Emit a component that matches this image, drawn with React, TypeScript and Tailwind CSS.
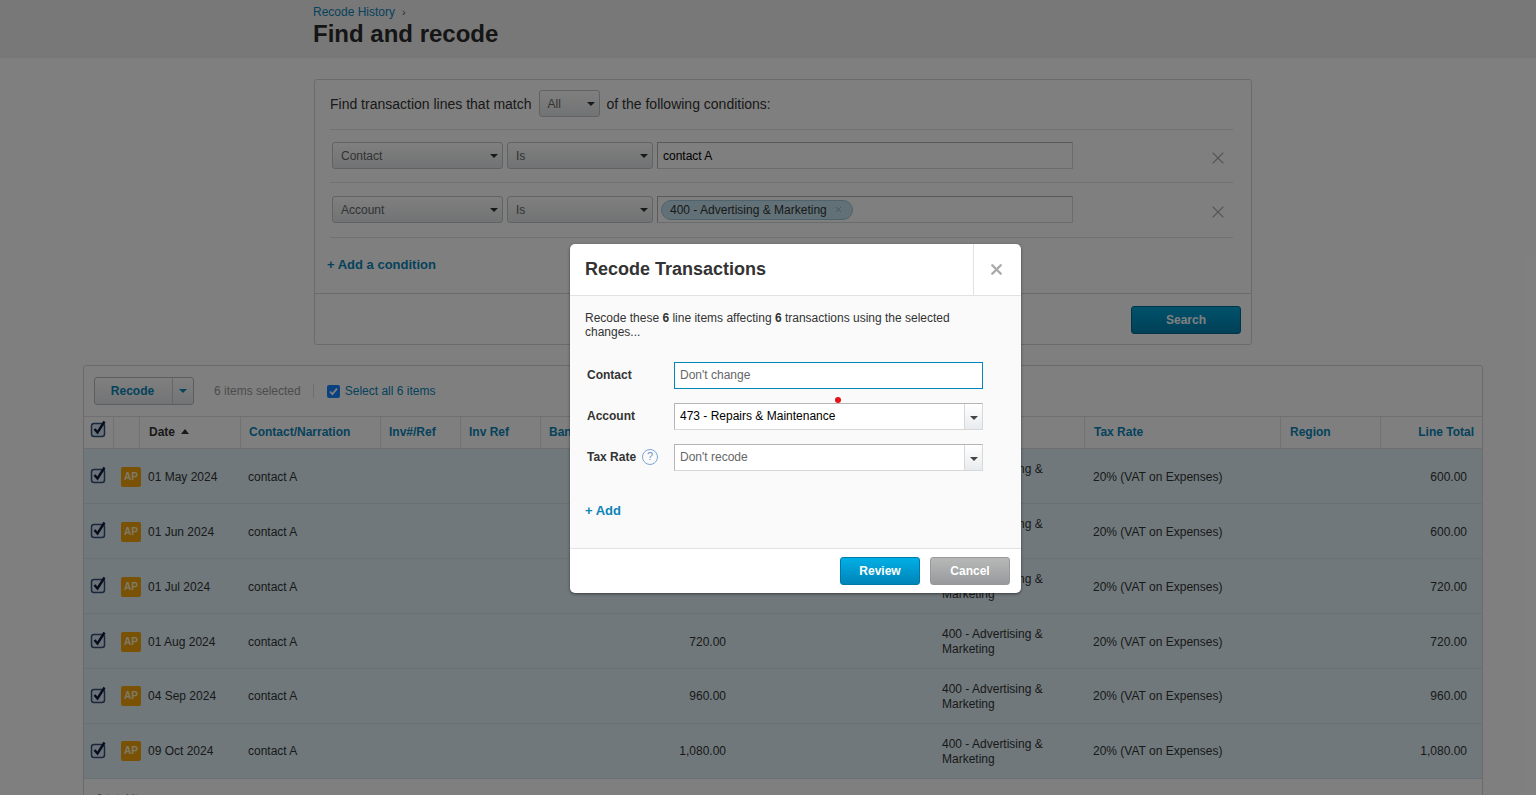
import React from 'react';
import { X } from 'lucide-react';

const rows = [
  { date: '01 May 2024', spent: '600.00', total: '600.00', nudge: 'pt-[2px]', check: '-mt-[5px]', account: '' },
  { date: '01 Jun 2024', spent: '600.00', total: '600.00', nudge: 'pt-[2px]', check: '-mt-[5px]', account: '' },
  { date: '01 Jul 2024', spent: '720.00', total: '720.00', nudge: 'pt-[2px]', check: '-mt-[5px]', account: '' },
  { date: '01 Aug 2024', spent: '720.00', total: '720.00', nudge: 'pt-[2px]', check: '-mt-[5px]', account: '' },
  { date: '04 Sep 2024', spent: '960.00', total: '960.00', nudge: '', check: '-mt-[3px]', account: 'pt-[2px]' },
  { date: '09 Oct 2024', spent: '1,080.00', total: '1,080.00', nudge: '', check: '-mt-[3px]', account: 'pt-[2px]' },
];

const gridCols = 'grid grid-cols-[30px_26px_101px_140px_80px_80px_193px_200px_151px_196px_100px_101px]';

function Caret({ className = 'border-t-[#333]' }: { className?: string }) {
  return <span className={`w-0 h-0 border-x-[4px] border-x-transparent border-t-[4px] ${className}`} />;
}

function CheckIcon() {
  return (
    <svg width="18" height="18" viewBox="0 0 18 18" className="block">
      <rect x="1.5" y="3.5" width="13" height="13" rx="2.5" fill="#dbe6f2" stroke="#35517a" strokeWidth="1.5" />
      <path d="M4.5 9l3 3.5 7-11" fill="none" stroke="#0c1c3a" strokeWidth="2.4" />
    </svg>
  );
}

function FakeSelect({ label, className }: { label: string; className: string }) {
  return (
    <div className={`h-[27px] flex items-center justify-between pl-2 pr-1 border border-[#c4c4c4] rounded-[3px] bg-gradient-to-b from-[#fff] to-[#e4e6e8] text-xs text-[#666] ${className}`}>
      <span>{label}</span>
      <Caret />
    </div>
  );
}

function ModalCombo({ value, dark }: { value: string; dark?: boolean }) {
  return (
    <div className="w-[309px] h-[27px] flex border border-[#d8d8d8] border-t-[#b5b5b5] border-l-[#b5b5b5] bg-white">
      <div className={`flex-1 flex items-center pl-[5px] pb-[2px] text-xs ${dark ? 'text-black' : 'text-[#666]'}`}>{value}</div>
      <div className="w-[18px] pt-[2px] flex items-center justify-center border-l border-[#d8d8d8] bg-gradient-to-b from-[#fff] to-[#e8ebee]">
        <Caret className="border-t-[#444]" />
      </div>
    </div>
  );
}

export default function App() {
  return (
    <div className="relative h-[795px] overflow-hidden bg-white text-xs text-[#333] font-['Liberation_Sans',Arial,sans-serif]">
      {/* page header */}
      <header className="h-[58px] pl-[313px] pt-[5px] bg-[#f0f0f0]">
        <div className="flex items-center gap-[7px] h-[14px] text-xs text-[#0a85b8]">
          Recode History <span className="text-[11px] text-[#555]">›</span>
        </div>
        <h1 className="text-2xl leading-[30px] font-bold text-[#2b2b2b]">Find and recode</h1>
      </header>

      {/* search conditions */}
      <section className="ml-[314px] mt-[21px] w-[938px] h-[266px] border border-[#d6d6d6] rounded-[3px]">
        <div className="ml-[15px] mr-[18px] h-[50px] pb-[2px] flex items-center gap-2 border-b border-[#e5e5e5] text-sm text-[#333]">
          Find transaction lines that match
          <FakeSelect label="All" className="w-[61px] -ml-[1px]" />
          <span className="-ml-[1px]">of the following conditions:</span>
        </div>
        <div className="ml-[15px] mr-[18px] h-[53px] pt-3 border-b border-[#e5e5e5]">
          <div className="flex gap-1 pl-[2px]">
            <FakeSelect label="Contact" className="w-[171px]" />
            <FakeSelect label="Is" className="w-[146px]" />
            <div className="w-[416px] h-[27px] flex items-center pl-[5px] border border-[#d8d8d8] border-t-[#b5b5b5] border-l-[#b5b5b5] text-xs text-black">contact A</div>
            <X size={20} strokeWidth={1.3} className="ml-[131px] mt-[6px] text-[#aaa]" />
          </div>
        </div>
        <div className="ml-[15px] mr-[18px] h-[55px] pt-[13px] border-b border-[#e5e5e5]">
          <div className="flex gap-1 pl-[2px]">
            <FakeSelect label="Account" className="w-[171px]" />
            <FakeSelect label="Is" className="w-[146px]" />
            <div className="w-[416px] h-[27px] flex items-center pl-[3px] border border-[#d8d8d8] border-t-[#b5b5b5] border-l-[#b5b5b5]">
              <span className="h-5 flex items-center gap-[7px] pl-2 pr-[9px] rounded-full border border-[#9cc5d6] bg-[#c4e2ee] text-xs text-[#333]">
                400 - Advertising &amp; Marketing <X size={9} className="text-[#6f9fb2]" />
              </span>
            </div>
            <X size={20} strokeWidth={1.3} className="ml-[131px] mt-[6px] text-[#aaa]" />
          </div>
        </div>
        <div className="h-[56px] pl-3 pb-[2px] flex items-center border-b border-[#d6d6d6] text-[13px] font-bold text-[#0a85b8]">+ Add a condition</div>
        <div className="h-[49px] pr-[10px] pt-3 flex justify-end">
          <button className="w-[110px] h-[28px] rounded-[3px] border border-[#00698f] bg-gradient-to-b from-[#00a4d6] to-[#0080ae] text-xs font-bold text-white">Search</button>
        </div>
      </section>

      {/* results */}
      <section className="ml-[83px] mt-5 w-[1400px] border border-[#d6d6d6] rounded-t-[3px]">
        <div className="h-[51px] pl-[10px] flex items-center border-b border-[#dedede]">
          <div className="w-[100px] h-[28px] flex rounded-[3px] border border-[#bbb] bg-gradient-to-b from-[#fff] to-[#e7e9eb] text-xs font-bold text-[#0a85b8]">
            <div className="w-[78px] pr-[2px] flex items-center justify-center border-r border-[#ccc]">Recode</div>
            <div className="flex-1 flex items-center justify-center"><Caret className="border-t-[#0a85b8]" /></div>
          </div>
          <span className="ml-5 text-xs text-[#999]">6 items selected</span>
          <span className="ml-3 h-[14px] border-l border-[#ddd]" />
          <span className="ml-[13px] w-[13px] h-[13px] flex items-center justify-center rounded-[2px] bg-[#1483ff]">
            <svg width="11" height="11" viewBox="0 0 11 11"><path d="M2 5.5l2.4 2.6L9 2.6" fill="none" stroke="#fff" strokeWidth="1.8" /></svg>
          </span>
          <span className="ml-[5px] text-xs text-[#0a85b8]">Select all 6 items</span>
        </div>

        <div className={`${gridCols} h-[32px] items-stretch text-xs font-bold text-[#0a85b8] border-b border-[#dedede]`}>
          <div className="pl-[6px] pt-[3px] border-r border-[#e4e4e4]"><CheckIcon /></div>
          <div className="border-r border-[#e4e4e4]" />
          <div className="pl-[9px] pb-[2px] flex items-center gap-[6px] border-r border-[#e4e4e4] text-[#333]">
            Date <span className="w-0 h-0 border-x-[4px] border-x-transparent border-b-[5px] border-b-[#333]" />
          </div>
          <div className="pl-2 pb-[2px] flex items-center border-r border-[#e4e4e4]">Contact/Narration</div>
          <div className="pl-2 pb-[2px] flex items-center border-r border-[#e4e4e4]">Inv#/Ref</div>
          <div className="pl-2 pb-[2px] flex items-center border-r border-[#e4e4e4]">Inv Ref</div>
          <div className="pl-2 pb-[2px] flex items-center border-r border-[#e4e4e4]">Bank</div>
          <div className="border-r border-[#e4e4e4]" />
          <div className="border-r border-[#e4e4e4]" />
          <div className="pl-[9px] pb-[2px] flex items-center border-r border-[#e4e4e4]">Tax Rate</div>
          <div className="pl-[9px] pb-[2px] flex items-center border-r border-[#e4e4e4]">Region</div>
          <div className="pr-2 pb-[2px] flex items-center justify-end">Line Total</div>
        </div>

        {rows.map((r) => (
          <div key={r.date} className={`${gridCols} h-[55px] items-center bg-[#e0f1f8] border-b border-[#d2e2e8] text-xs text-[#333] ${r.nudge}`}>
            <div className={`pl-[6px] ${r.check}`}><CheckIcon /></div>
            <div className="pl-[7px]">
              <span className="w-5 h-5 flex items-center justify-center rounded-[2px] bg-[#f2a50c] text-[10px] font-bold text-[#fff3d0]">AP</span>
            </div>
            <div className="pl-2">{r.date}</div>
            <div className="pl-[7px]">contact A</div>
            <div />
            <div />
            <div className="pr-2 text-right">{r.spent}</div>
            <div />
            <div className={`pl-2 leading-[15px] ${r.account}`}>400 - Advertising &amp; Marketing</div>
            <div className="pl-2">20% (VAT on Expenses)</div>
            <div />
            <div className="pr-[15px] text-right">{r.total}</div>
          </div>
        ))}
        <div className="h-10 pl-3 pt-3 text-xs text-[#888]">6 total items</div>
      </section>

      {/* modal backdrop */}
      <div className="absolute inset-0 bg-black/50" />

      {/* recode dialog */}
      <div className="absolute left-[570px] top-[244px] w-[451px] h-[349px] flex flex-col rounded-[5px] bg-white shadow-[0_1px_3px_rgba(0,0,0,0.5)] overflow-hidden">
        <div className="h-[52px] flex items-stretch border-b border-[#e2e2e2]">
          <h2 className="flex-1 pl-[15px] pb-[2px] flex items-center text-lg font-bold text-[#333]">Recode Transactions</h2>
          <div className="w-[48px] pr-[2px] pb-[1px] flex items-center justify-center border-l border-[#e2e2e2]">
            <X size={17} strokeWidth={3.4} className="text-[#aaa]" />
          </div>
        </div>
        <div className="flex-1 px-[15px] pt-[15px] bg-[#fafafa] border-b border-[#e2e2e2]">
          <p className="w-[390px] text-xs leading-[14px] text-[#333]">
            Recode these <b>6</b> line items affecting <b>6</b> transactions using the selected changes...
          </p>
          <div className="mt-[23px] flex flex-col gap-[14px]">
            <div className="flex items-center">
              <label className="w-[89px] pl-[2px] pb-[2px] text-xs font-bold text-[#333]">Contact</label>
              <div className="w-[309px] h-[27px] flex items-center pl-[5px] pb-[2px] border border-[#0088bb] bg-white text-xs text-[#666]">Don't change</div>
            </div>
            <div className="relative flex items-center">
              <label className="w-[89px] pl-[2px] pb-[2px] text-xs font-bold text-[#333]">Account</label>
              <ModalCombo value="473 - Repairs & Maintenance" dark />
              <span className="absolute left-[250px] -top-[6px] w-[6px] h-[6px] rounded-full bg-[#e8101a]" />
            </div>
            <div className="flex items-center">
              <label className="w-[89px] pl-[2px] pb-[2px] flex items-center gap-[6px] text-xs font-bold text-[#333]">
                Tax Rate
                <span className="w-4 h-4 flex items-center justify-center rounded-full border border-[#7fa6d6] text-[11px] font-normal text-[#6b96cc]">?</span>
              </label>
              <ModalCombo value="Don't recode" />
            </div>
          </div>
          <div className="mt-[31px] text-[13px] font-bold text-[#0a85b8]">+ Add</div>
        </div>
        <div className="h-[44px] pt-2 pr-[11px] flex justify-end gap-[10px]">
          <button className="w-[80px] h-[28px] rounded-[3px] border border-[#0079a8] bg-gradient-to-b from-[#00b0e6] to-[#0084b8] text-xs font-bold text-white">Review</button>
          <button className="w-[80px] h-[28px] rounded-[3px] border border-[#999] bg-gradient-to-b from-[#b8b8b8] to-[#979a9c] text-xs font-bold text-white">Cancel</button>
        </div>
      </div>
    </div>
  );
}
